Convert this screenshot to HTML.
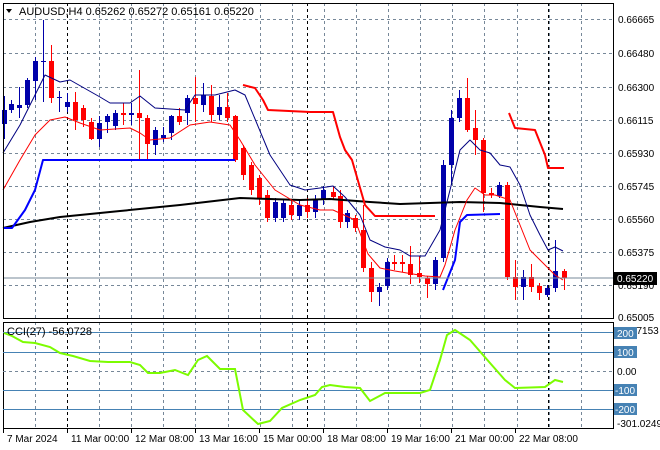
<!DOCTYPE html>
<html><head><meta charset="utf-8"><style>
html,body{margin:0;padding:0;background:#fff;}
svg{display:block;font-family:"Liberation Sans",sans-serif;}
</style></head><body>
<svg id="s" width="660" height="450" xmlns="http://www.w3.org/2000/svg">
<rect width="660" height="450" fill="#fff"/>
<g id="grid"></g>
<g id="cand"></g>
<g fill="none" stroke-linejoin="round">
<polyline stroke="#000" stroke-width="2" points="3,228 30,222 60,217 120,211 180,205 240,198 300,200 330,199 370,202 400,204 430,203 460,202 500,203 520,205 540,207 563,209"/>
<polyline stroke="#0000ff" stroke-width="2" points="3,228 12,228 25,210 35,190 43,160 235,160"/>
<polyline stroke="#0000ff" stroke-width="2" points="443,290 455,260 460,222 467,215 500,214"/>
<polyline stroke="#000080" stroke-width="1" points="3,153 20,125 45,75 60,82 70,80 100,97 110,103 130,103 140,96 155,108 185,110 195,95 215,95 235,90 245,95 270,155 290,185 305,190 320,188 333,186 345,197 360,215 370,240 385,247 400,250 410,256 425,256 440,230 450,190 460,150 470,140 480,150 490,153 500,165 510,167 520,185 530,215 540,235 548,250 555,247 563,251"/>
<polyline stroke="#ff0000" stroke-width="1" points="3,190 20,160 35,135 50,120 65,117 80,123 100,130 130,128 140,133 150,140 170,138 190,125 210,122 230,125 240,140 255,165 275,190 300,205 320,210 333,210 355,220 368,254 380,268 395,271 425,276 440,277 445,265 455,230 467,200 475,188 485,195 495,195 510,200 520,225 530,250 545,265 555,275 563,280"/>
<polyline stroke="#ff0000" stroke-width="2" points="243,85 255,88 263,100 268,110 310,112 333,112 340,137 345,150 352,160 365,205 375,216 435,216"/>
<polyline stroke="#ff0000" stroke-width="2" points="509,113 515,128 535,130 545,155 548,168 564,168"/>
</g>
<line x1="3" y1="278" x2="613" y2="278" stroke="#778899" stroke-width="1"/>
<rect x="3.5" y="3.5" width="610" height="315" fill="none" stroke="#000"/>
<rect x="3.5" y="322.5" width="610" height="106" fill="none" stroke="#000"/>
<g stroke="#4682b4" stroke-width="1">
<line x1="3" y1="332.5" x2="613" y2="332.5"/><line x1="3" y1="352.5" x2="613" y2="352.5"/>
<line x1="3" y1="390.5" x2="613" y2="390.5"/><line x1="3" y1="409.5" x2="613" y2="409.5"/>
</g>
<line x1="3" y1="371.5" x2="613" y2="371.5" stroke="#778899" stroke-dasharray="3,3"/>
<polyline fill="none" stroke="#7cfc00" stroke-width="2" points="4,333 12,336 23,342 35,343 50,347 60,353 73,356 90,361 108,362 130,362 140,365 148,373 160,373 175,370 188,375 198,360 207,356 220,369 235,369 243,410 258,424 270,421 282,408 300,400 315,395 322,387 330,385 345,387 360,388 370,401 385,393 420,393 430,390 440,360 447,335 455,330 470,340 490,363 505,380 515,388 545,387 555,380 563,382"/>
<g font-size="11" fill="#000">
<text x="19" y="15">AUDUSD,H4  0.65262 0.65272 0.65161 0.65220</text>
<text x="7" y="335">CCI(27) -56.0728</text>
</g>
<polygon points="6,9 12,9 9,13" fill="#000"/>
<g id="ax" font-size="10" fill="#000"></g>
<rect x="614" y="272" width="43" height="13" fill="#000"/>
<text x="617" y="282" font-size="10" fill="#fff">0.65220</text>
</svg>
<script>
var NS="http://www.w3.org/2000/svg";
function el(p,t,a,txt){var e=document.createElementNS(NS,t);for(var k in a)e.setAttribute(k,a[k]);if(txt)e.textContent=txt;document.getElementById(p).appendChild(e);return e;}
var hy=[19,53,87,120,153,186,219,252,285];
hy.forEach(function(y){el('grid','line',{x1:3,x2:613,y1:y+.5,y2:y+.5,stroke:'#778899','stroke-dasharray':'3,3'});});
for(var x=35;x<613;x+=32.1){var xx=Math.round(x)+.5;el('grid','line',{x1:xx,x2:xx,y1:3,y2:318,stroke:'#778899','stroke-dasharray':'3,3'});el('grid','line',{x1:xx,x2:xx,y1:322,y2:428,stroke:'#778899','stroke-dasharray':'3,3'});}
[67,307,548].forEach(function(x){el('grid','line',{x1:x+.5,x2:x+.5,y1:3,y2:318,stroke:'#000','stroke-dasharray':'3,3'});el('grid','line',{x1:x+.5,x2:x+.5,y1:322,y2:428,stroke:'#000','stroke-dasharray':'3,3'});});
var labs=["0.66665","0.66480","0.66300","0.66115","0.65930","0.65745","0.65560","0.65375","0.65190","0.65005"];
var ly=[19,53,87,120,153,186,219,252,285,317];
labs.forEach(function(l,i){el('ax','text',{x:618,y:ly[i]+4},l);});
var C=[[4,124,110,96,139,'b'],[11,110,104,100,113,'b'],[19,108,105,87,118,'b'],[27,105,80,78,108,'b'],[35,81,61,57,100,'b'],[43,62,61,20,102,'b'],[51,61,98,45,103,'r'],[59,98,97,91,112,'b'],[67,107,102,93,112,'b'],[75,102,120,92,130,'r'],[83,108,120,105,127,'r'],[91,122,139,118,140,'r'],[99,139,123,116,147,'b'],[107,122,116,114,133,'b'],[115,126,113,110,130,'b'],[123,113,115,103,125,'r'],[131,115,113,103,125,'b'],[139,113,118,70,160,'r'],[147,118,144,115,160,'r'],[155,145,130,127,155,'b'],[163,138,135,127,142,'b'],[171,133,116,115,140,'b'],[179,116,122,108,125,'r'],[187,113,98,95,125,'b'],[195,98,104,77,122,'r'],[203,105,95,83,112,'b'],[211,96,115,85,122,'r'],[219,115,107,95,120,'b'],[227,107,118,93,122,'r'],[235,116,160,115,162,'r'],[243,148,175,145,180,'r'],[251,165,190,162,195,'r'],[259,178,198,175,205,'r'],[267,195,218,190,222,'r'],[275,218,202,198,222,'b'],[283,218,203,200,222,'b'],[291,205,215,200,220,'r'],[299,216,205,200,220,'b'],[307,205,212,198,218,'r'],[315,212,200,195,218,'b'],[323,200,190,186,205,'b'],[333,192,197,186,200,'r'],[340,196,222,190,228,'r'],[347,222,213,210,228,'b'],[355,218,228,215,232,'r'],[363,230,268,205,272,'r'],[371,268,292,262,302,'r'],[379,292,287,283,306,'b'],[387,286,262,258,290,'b'],[394,262,264,255,270,'r'],[402,262,264,255,272,'r'],[410,264,275,246,284,'r'],[419,273,277,256,283,'r'],[427,278,284,276,298,'r'],[435,284,260,257,290,'b'],[443,258,165,160,262,'b'],[451,165,118,110,185,'b'],[459,118,98,90,122,'b'],[467,98,130,78,132,'r'],[475,128,140,110,155,'r'],[483,140,193,138,212,'r'],[491,193,195,188,198,'r'],[499,196,185,182,198,'b'],[507,185,277,182,280,'r'],[515,277,287,260,300,'r'],[523,287,277,270,300,'b'],[531,277,287,264,292,'r'],[539,286,293,283,300,'r'],[547,295,288,285,297,'b'],[555,288,271,240,292,'b'],[564,271,278,269,290,'r']];
C.forEach(function(c){var col=c[5]=='b'?'#0000aa':'#ff0000';var t=Math.min(c[1],c[2]),b=Math.max(c[1],c[2]);
el('cand','line',{x1:c[0]+.5,x2:c[0]+.5,y1:c[3],y2:c[4],stroke:col});
el('cand','rect',{x:c[0]-2,y:t,width:5,height:Math.max(1,b-t),fill:col});});
el('ax','text',{x:617,y:334},'246.7153');
[[200,333],[100,352],[-100,390],[-200,409]].forEach(function(a){el('ax','rect',{x:614,y:a[1]-6,width:23,height:12,fill:'#4682b4'});el('ax','text',{x:a[0]<0?615:617,y:a[1]+4,fill:'#fff'},String(a[0]));});
el('ax','text',{x:617,y:375},'0.00');
el('ax','text',{x:617,y:427},'-301.0249');
var d=[[3,'7 Mar 2024'],[67,'11 Mar 00:00'],[131,'12 Mar 08:00'],[195,'13 Mar 16:00'],[259,'15 Mar 00:00'],[323,'18 Mar 08:00'],[387,'19 Mar 16:00'],[451,'21 Mar 00:00'],[515,'22 Mar 08:00']];
d.forEach(function(a){el('ax','line',{x1:a[0]+.5,x2:a[0]+.5,y1:429,y2:433,stroke:'#000'});el('ax','text',{x:a[0]+4,y:442},a[1]);});
</script>
</body></html>
